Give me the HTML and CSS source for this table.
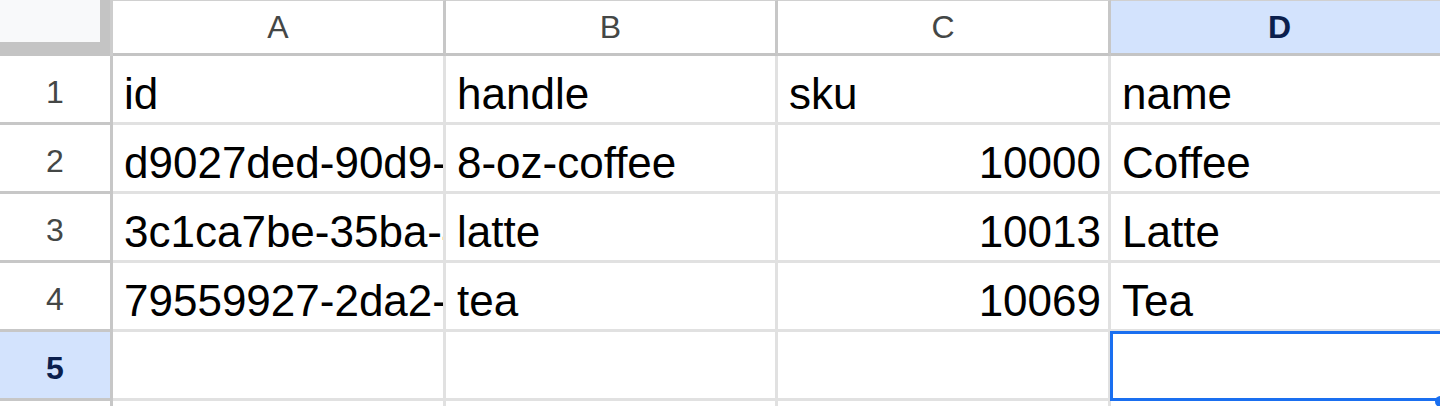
FILE: index.html
```html
<!DOCTYPE html>
<html>
<head>
<meta charset="utf-8">
<link rel="stylesheet" href="styles.css">
</head>
<body>
<div class="sheet">
  <div class="corner"><div class="corner-inner"></div></div>
  <div class="colhead">A</div>
  <div class="colhead">B</div>
  <div class="colhead">C</div>
  <div class="colhead sel">D</div>

  <div class="rowhead">1</div>
  <div class="cell">id</div>
  <div class="cell">handle</div>
  <div class="cell">sku</div>
  <div class="cell">name</div>

  <div class="rowhead">2</div>
  <div class="cell">d9027ded-90d9-4c4b-9a61-2f1e0b7c3d11</div>
  <div class="cell">8-oz-coffee</div>
  <div class="cell num">10000</div>
  <div class="cell">Coffee</div>

  <div class="rowhead">3</div>
  <div class="cell">3c1ca7be-35ba-4f0e-8b2a-91d7c6e5a402</div>
  <div class="cell">latte</div>
  <div class="cell num">10013</div>
  <div class="cell">Latte</div>

  <div class="rowhead">4</div>
  <div class="cell">79559927-2da2-4a8c-b3f1-6e0d52c9a817</div>
  <div class="cell">tea</div>
  <div class="cell num">10069</div>
  <div class="cell">Tea</div>

  <div class="rowhead sel">5</div>
  <div class="cell"></div>
  <div class="cell"></div>
  <div class="cell"></div>
  <div class="cell active"></div>

  <div class="rowhead tail"></div>
  <div class="cell tail"></div>
  <div class="cell tail"></div>
  <div class="cell tail"></div>
  <div class="cell tail"></div>
</div>
</body>
</html>
```

FILE: styles.css
```css
html, body {
  margin: 0;
  padding: 0;
  background: #ffffff;
  overflow: hidden;
}

.sheet {
  display: grid;
  grid-template-columns: 113px 333px 332px 333px 340px;
  grid-template-rows: 56px 69px 69px 69px 69px 69px 5px;
  font-family: "Liberation Sans", Arial, sans-serif;
  width: 1440px;
  height: 406px;
  overflow: hidden;
}

.corner {
  background: #c4c4c4;
  border-right: 3px solid #cdcdcd;
  box-sizing: border-box;
  display: flex;
  align-items: flex-start;
}

.corner-inner {
  width: 100px;
  height: 42px;
  background: #f8f9fa;
}

.colhead {
  box-sizing: border-box;
  border-top: 1px solid #d0d0d0;
  border-right: 3px solid #c7c7c7;
  border-bottom: 3px solid #c4c4c4;
  display: flex;
  align-items: center;
  justify-content: center;
  font-size: 32px;
  color: #444746;
  background: #ffffff;
}

.rowhead {
  box-sizing: border-box;
  border-right: 3px solid #c7c7c7;
  border-bottom: 3px solid #c7c7c7;
  display: flex;
  align-items: center;
  justify-content: center;
  padding-top: 6px;
  font-size: 32px;
  color: #444746;
  background: #ffffff;
}

.colhead.sel,
.rowhead.sel {
  background: #d3e3fd;
  color: #0b1f4d;
  font-weight: bold;
}

.cell {
  box-sizing: border-box;
  border-right: 3px solid #e1e1e1;
  border-bottom: 3px solid #e1e1e1;
  display: flex;
  align-items: flex-end;
  padding: 0 7px 3px 11px;
  font-size: 44px;
  color: #000000;
  white-space: nowrap;
  overflow: hidden;
  min-width: 0;
}

.rowhead.tail,
.cell.tail {
  border-bottom: none;
  padding: 0;
}

.cell.num {
  justify-content: flex-end;
}

.cell.active {
  position: relative;
  overflow: visible;
}

.cell.active::after {
  content: "";
  position: absolute;
  top: -1px;
  left: -1px;
  right: -20px;
  bottom: -3px;
  border: 3px solid #1a6ff0;
}

.cell.active::before {
  content: "";
  position: absolute;
  left: 324px;
  bottom: -9px;
  width: 11px;
  height: 11px;
  border-radius: 50%;
  background: #1a6ff0;
  z-index: 1;
}
```
